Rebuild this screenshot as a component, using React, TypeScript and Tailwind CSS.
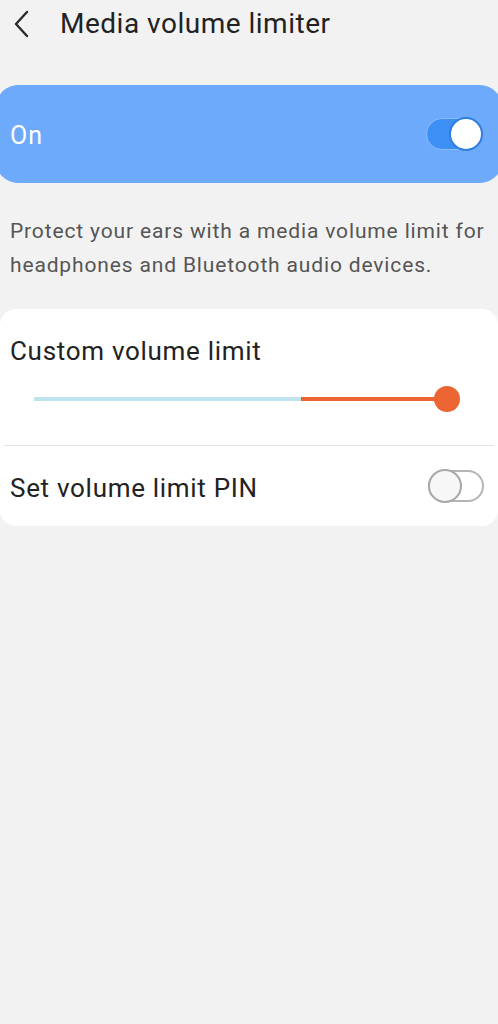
function Toggle({ on }: { on: boolean }) {
    if (on) {
        return (
            <div className="relative h-[32px] w-[56px]">
                <div className="absolute inset-0 rounded-full border border-[#8cbdfa] bg-[#3d8ef5]"></div>
                <div className="absolute right-[-1px] top-[-1px] h-[34px] w-[34px] rounded-full border-2 border-[#2f7fe0] bg-white"></div>
            </div>
        );
    }
    return (
        <div className="relative h-[32px] w-[56px]">
            <div className="absolute inset-0 rounded-full border-2 border-[#b4b4b4] bg-white"></div>
            <div className="absolute left-0 top-[-1px] h-[34px] w-[34px] rounded-full border-2 border-[#a8a8a8] bg-[#f7f7f7]"></div>
        </div>
    );
}

export default function App() {
    return (
        <div className="min-h-screen w-full bg-[#f2f2f2] font-['Roboto',sans-serif]">
            {/* Header */}
            <header className="flex h-[48px] items-center">
                <svg className="ml-[10px] h-[30px] w-[24px]" viewBox="0 0 24 30" fill="none" stroke="#2a2a2a" strokeWidth="2.4" strokeLinecap="round" strokeLinejoin="round">
                    <polyline points="17,3 6,15 17,27" />
                </svg>
                <h1 className="ml-[26px] text-[28px] tracking-[0.5px] text-[#222]">Media volume limiter</h1>
            </header>

            {/* Master switch */}
            <div className="mt-[37px] -mx-[4px] flex h-[98px] items-center justify-between rounded-[22px] bg-[#6daafb] pl-[14px] pr-[20px]">
                <span className="pt-[3px] text-[25px] tracking-[1px] text-white">On</span>
                <Toggle on />
            </div>

            <p className="px-[10px] pt-[31px] text-[21px] leading-[34px] tracking-[0.85px] text-[#555]">
                Protect your ears with a media volume limit for headphones and Bluetooth audio devices.
            </p>

            {/* Settings card */}
            <div className="mt-[27px] rounded-[16px] bg-white">
                <div className="px-[10px] pt-[26px] pb-[33px]">
                    <div className="text-[26px] leading-[32px] tracking-[0.7px] text-[#222]">Custom volume limit</div>
                    <div className="relative mt-[19px] ml-[24px] mr-[41px] h-[26px]">
                        <div className="absolute left-0 right-0 top-[11px] flex h-[4px]">
                            <div className="h-full w-[64.6%] bg-[#bfe3ef]"></div>
                            <div className="h-full flex-1 bg-[#ec6432]"></div>
                        </div>
                        <div className="absolute right-[-13px] top-0 h-[26px] w-[26px] rounded-full bg-[#ec6432]"></div>
                    </div>
                </div>
                <div className="mx-[4px] h-px bg-[#e4e4e4]"></div>
                <div className="flex h-[80px] items-center justify-between pl-[10px] pr-[14px]">
                    <span className="pt-[4px] text-[26px] tracking-[0.7px] text-[#222]">Set volume limit PIN</span>
                    <Toggle on={false} />
                </div>
            </div>
        </div>
    );
}
